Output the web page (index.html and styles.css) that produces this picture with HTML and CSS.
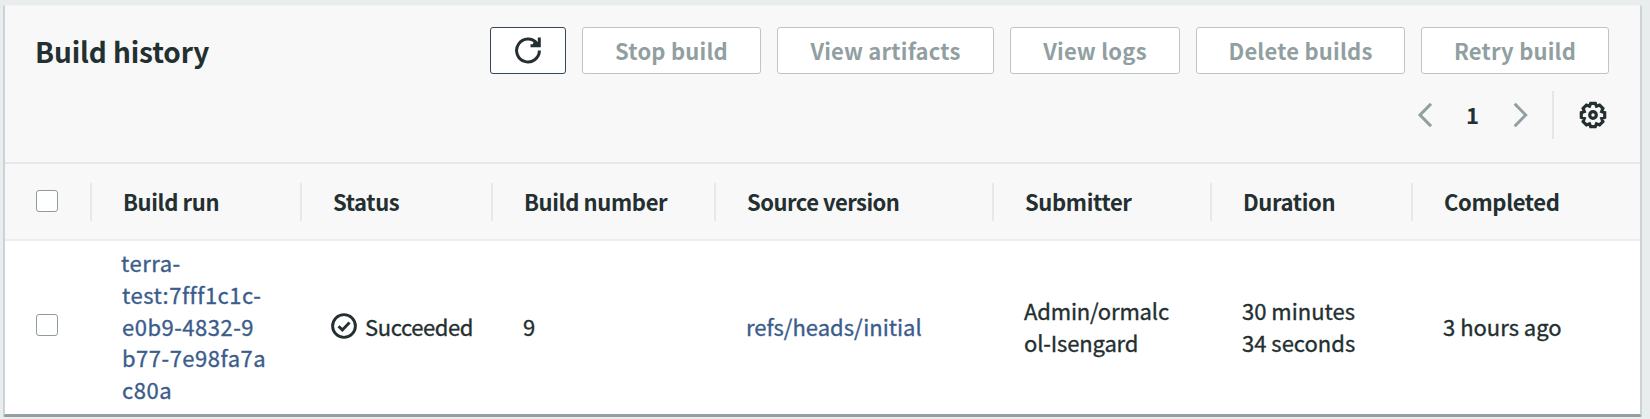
FILE: index.html
```html
<!DOCTYPE html>
<html lang="en">
<head>
<meta charset="utf-8">
<title>Build history</title>
<link rel="stylesheet" href="styles.css">
</head>
<body>
<main class="panel">
  <header class="panel-header">
    <div class="title-row">
      <h1 class="title">Build history</h1>
      <div class="actions">
        <button class="btn btn-refresh" aria-label="Refresh">
          <svg width="28" height="28" viewBox="0 0 28 28" fill="none" stroke="#232f30" stroke-width="3"><path d="M25.400 14.500A11.400 11.400 0 1 1 23 7.500"/><path d="M25.300 1.500v8.300h-8.800"/><path d="M19 8h6"/></svg>
        </button>
        <button class="btn w-stop">Stop build</button>
        <button class="btn w-artifacts">View artifacts</button>
        <button class="btn w-logs">View logs</button>
        <button class="btn w-delete">Delete builds</button>
        <button class="btn w-retry">Retry build</button>
      </div>
    </div>
    <div class="pager">
      <svg class="chevron" width="15" height="26" viewBox="0 0 15 26"><path d="M14 1.800L3 13l11 11.200"/></svg>
      <span class="page">1</span>
      <svg class="chevron" width="15" height="26" viewBox="0 0 15 26"><path d="M1.700 1.800L12.700 13 1.700 24.200"/></svg>
      <span class="divider"></span>
      <svg class="gear" width="28" height="28" viewBox="-14 -14 28 28"><path d="M-2.300 -11.700H2.300L3.500 -8.700L6.600 -9.900L9.900 -6.600L8.700 -3.500L11.700 -2.300V2.300L8.700 3.500L9.900 6.600L6.600 9.900L3.500 8.700L2.300 11.700H-2.300L-3.500 8.700L-6.600 9.900L-9.900 6.600L-8.700 3.500L-11.700 2.300V-2.300L-8.700 -3.500L-9.900 -6.600L-6.600 -9.900L-3.500 -8.700Z"/><circle r="3.300"/></svg>
    </div>
  </header>
  <div class="grid head">
    <div class="th"><span class="checkbox"></span></div>
    <div class="th">Build run</div>
    <div class="th">Status</div>
    <div class="th">Build number</div>
    <div class="th source">Source version</div>
    <div class="th">Submitter</div>
    <div class="th">Duration</div>
    <div class="th">Completed</div>
  </div>
  <div class="grid row">
    <div class="td"><span class="checkbox"></span></div>
    <div class="td"><a class="link run">terra-<br>test:7fff1c1c-<br>e0b9-4832-9<br>b77-7e98fa7a<br>c80a</a></div>
    <div class="td status">
      <svg width="26" height="26" viewBox="0 0 26 26" fill="none" stroke="#232f30" stroke-width="2.900"><circle cx="13" cy="13" r="11.400"/><path d="M7.500 13.200l3.900 3.700 7.100-7.300"/></svg>
      <span>Succeeded</span>
    </div>
    <div class="td">9</div>
    <div class="td"><a class="link">refs/heads/initial</a></div>
    <div class="td submitter"><span>Admin/ormalc<br>ol-Isengard</span></div>
    <div class="td">30 minutes<br>34 seconds</div>
    <div class="td">3 hours ago</div>
  </div>
</main>
</body>
</html>
```
FILE: styles.css
```css
* { box-sizing: border-box; }
body {
  margin: 0;
  height: 419px;
  padding: 5px 8px 2px 3px;
  background: #e9eded;
  color: #232f30;
  font: 22px/31.8px "Noto Sans CJK SC", "Noto Sans", sans-serif;
  overflow: hidden;
}
.panel {
  height: 412px;
  border: 2px solid #cbd3d5;
  border-top: 1px solid #f1f3f3;
  border-bottom: 3px solid #929fa3;
  border-radius: 0 0 2px 2px;
  background: #fff;
}
.panel-header {
  height: 158px;
  padding: 21px 31px 0 30px;
  background: #f8f8f8;
  border-bottom: 2px solid #e5e9e9;
}
.title-row { display: flex; justify-content: space-between; height: 47px; }
.title { margin: 0; font-size: 28px; line-height: 49px; letter-spacing: -0.12px; }
.actions { display: flex; gap: 16px; }
.btn {
  height: 47px;
  padding: 0 0 2px;
  border: 1.500px solid #bcc6c9;
  border-radius: 3px;
  background: #fff;
  color: #929fa2;
  font: 700 22px/42px "Noto Sans CJK SC", "Noto Sans", sans-serif;
  letter-spacing: 0.2px;
}
.btn-refresh {
  display: flex;
  align-items: center;
  justify-content: center;
  width: 76px;
  border: 1.500px solid #34465c;
}
.w-stop { width: 179px; }
.w-artifacts { width: 217px; }
.w-logs { width: 170px; }
.w-delete { width: 209px; }
.w-retry { width: 188px; }
.pager { display: flex; align-items: center; justify-content: flex-end; height: 48px; margin-top: 17px; }
.chevron { fill: none; stroke: #929fa2; stroke-width: 3; }
.page { width: 81px; text-align: center; font-weight: 700; font-size: 22px; }
.divider { width: 2px; height: 48px; margin: 0 25px 0 24px; background: #e2e7e7; }
.gear { margin-right: 2px; fill: none; stroke: #232f30; stroke-width: 3.200; }
.grid { display: grid; grid-template-columns: 87px 210px 191px 223px 278px 218px 201px 1fr; }
.head { height: 77px; padding: 19px 0 18px; background: #f8f8f8; border-bottom: 2px solid #eceeee; }
.th {
  display: flex;
  align-items: center;
  height: 38px;
  padding: 0 0 1px 31px;
  border-right: 2px solid #e5e9e9;
  font-weight: 700;
  letter-spacing: -0.36px;
}
.th:last-child { border-right: 0; }
.th:first-child { padding-bottom: 3px; }
.source { letter-spacing: -0.52px; }
.row { height: 171px; align-items: center; -webkit-text-stroke: 0.350px currentColor; }
.td { padding-left: 30px; }
.th:first-child, .td:first-child { padding-left: 31px; }
.td:first-child { display: flex; padding-bottom: 3px; }
.checkbox { width: 22px; height: 22px; border: 1.500px solid #8d9ba0; border-radius: 3px; background: #fff; }
.link { color: #3b5c8c; }
.run { margin-left: -1px; letter-spacing: 0.500px; }
.status { display: flex; align-items: center; gap: 8px; padding-left: 29px; letter-spacing: -0.400px; }
.submitter { letter-spacing: -0.150px; }
```
